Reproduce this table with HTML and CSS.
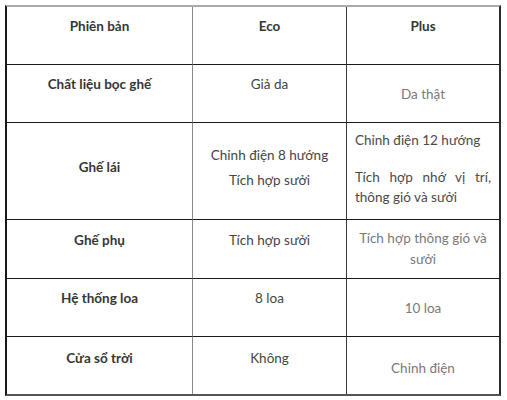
FILE: index.html
```
<!DOCTYPE html>
<html lang="vi">
<head>
<meta charset="utf-8">
<link rel="stylesheet" href="styles.css">
</head>
<body>
<table class="spec">
  <colgroup><col class="c1"><col class="c2"><col class="c3"></colgroup>
  <tr class="r1">
    <td class="lbl"><p>Phiên bản</p></td>
    <td class="lbl"><p>Eco</p></td>
    <td class="lbl last"><p>Plus</p></td>
  </tr>
  <tr class="r2">
    <td class="lbl"><p>Chất liệu bọc ghế</p></td>
    <td class="eco"><p>Giả da</p></td>
    <td class="plus last"><p>Da thật</p></td>
  </tr>
  <tr class="r3">
    <td class="lbl"><p class="m8">Ghế lái</p></td>
    <td class="eco"><p class="gap">Chỉnh điện 8 hướng</p><p class="m7">Tích hợp sưởi</p></td>
    <td class="plus dark last">
      <p class="left">Chỉnh điện 12 hướng</p>
      <p class="left m6"><span class="jl">Tích hợp nhớ vị trí,</span>thông gió và sưởi</p>
    </td>
  </tr>
  <tr class="r4">
    <td class="lbl"><p>Ghế phụ</p></td>
    <td class="eco"><p>Tích hợp sưởi</p></td>
    <td class="plus last"><p class="tight">Tích hợp thông gió và<br>sưởi</p></td>
  </tr>
  <tr class="r5">
    <td class="lbl"><p>Hệ thống loa</p></td>
    <td class="eco"><p>8 loa</p></td>
    <td class="plus last"><p>10 loa</p></td>
  </tr>
  <tr class="r6">
    <td class="lbl bottom"><p class="m16">Cửa sổ trời</p></td>
    <td class="eco bottom"><p class="m16">Không</p></td>
    <td class="plus last bottom"><p class="mt4">Chỉnh điện</p></td>
  </tr>
</table>
</body>
</html>
```
FILE: styles.css
```
html, body {
  margin: 0;
  padding: 0;
  background: #ffffff;
}
body {
  padding: 5px 0 0 5px;
  font-family: Lato, "Noto Sans", "Liberation Sans", sans-serif;
  font-size: 13.5px;
  line-height: 20px;
  color: #444;
}
.spec {
  border-collapse: separate;
  border-spacing: 0;
  width: 496px;
  table-layout: fixed;
  border-top: 2px solid #a9a9a9;
  border-left: 2px solid #1a1a1a;
  border-right: 2px solid #2a2a2a;
  border-bottom: 2px solid #555;
}
.c1 { width: 186px; }
.c2 { width: 154px; }
.c3 { width: 152px; }
.spec td {
  padding: 0 8px;
  text-align: center;
  vertical-align: middle;
  border-bottom: 1px solid #1a1a1a;
  border-right: 1px solid #3a3a3a;
}
.spec td:first-child {
  border-right-color: #8a8a8a;
}
.spec td.last { border-right: none; }
.spec td.bottom { border-bottom: none; }
.r1 { height: 58px; }
.r2 { height: 58px; }
.r3 { height: 97px; }
.r4 { height: 59px; }
.r5 { height: 58px; }
.r6 { height: 57px; }
.spec p {
  margin: 0 0 19px;
}
.lbl {
  font-weight: 700;
  color: #363636;
}
.eco { color: #454545; }
.plus { color: #7a7a7a; }
.spec .plus p { margin: 0; }
.plus.dark { color: #4a4a4a; }
.spec p.m8 { margin-bottom: 8px; }
.spec p.gap { margin-bottom: 5px; }
.spec p.m7 { margin-bottom: 7px; }
.spec .plus p.left { text-align: left; }
.spec .plus p.left + p.left { margin-top: 17px; }
.spec .plus p.m6 { margin-bottom: 6px; }
.jl {
  display: block;
  text-align: justify;
  text-align-last: justify;
}
.spec .plus p.tight { line-height: 21px; }
.spec p.m16 { margin-bottom: 16px; }
.spec .plus p.mt4 { margin-top: 4px; }
```
